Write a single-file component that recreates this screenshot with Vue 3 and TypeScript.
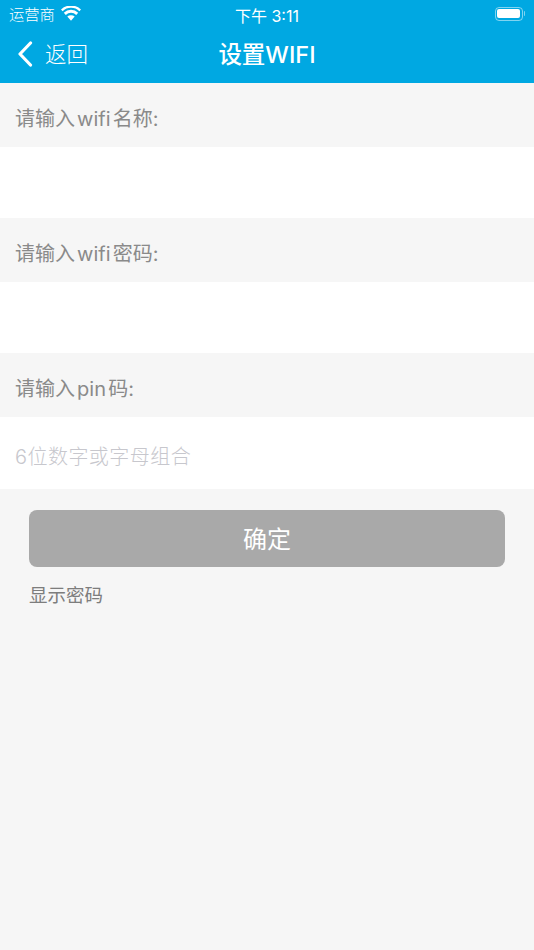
<script setup lang="ts">
const sections = [
  { label: '请输入 wifi 名称:', placeholder: '' },
  { label: '请输入 wifi 密码:', placeholder: '' },
  { label: '请输入 pin 码:', placeholder: '6位数字或字母组合' },
]
</script>

<template>
  <div class="page">
    <header class="header">
      <div class="status">
        <div class="status-left">
          <span class="carrier">运营商</span>
          <svg class="wifi" width="20" height="15" viewBox="0 0 20 15">
            <path d="M10 14.8 L6.3 10.6 A5.4 5.4 0 0 1 13.7 10.6 Z" fill="#fff" />
            <path d="M4.8 8.9 L2.8 6.7 A10.2 10.2 0 0 1 17.2 6.7 L15.2 8.9 A7.4 7.4 0 0 0 4.8 8.9 Z" fill="#fff" />
            <path d="M1.6 5.3 L0 3.5 A14.4 14.4 0 0 1 20 3.5 L18.4 5.3 A12 12 0 0 0 1.6 5.3 Z" fill="#fff" />
          </svg>
        </div>
        <span class="time">下午 3:11</span>
        <div class="battery">
          <div class="battery-body"><div class="battery-fill"></div></div>
          <div class="battery-cap"></div>
        </div>
      </div>
      <div class="nav">
        <div class="back">
          <svg width="16" height="26" viewBox="0 0 16 26">
            <path d="M13.5 2 L3 13 L13.5 24" fill="none" stroke="#fff" stroke-width="3.2" stroke-linecap="round" stroke-linejoin="round" />
          </svg>
          <span class="back-text">返回</span>
        </div>
        <div class="title">设置WIFI</div>
      </div>
    </header>

    <section v-for="s in sections" :key="s.label">
      <div class="label">{{ s.label }}</div>
      <div class="field">{{ s.placeholder }}</div>
    </section>

    <div class="actions">
      <button class="confirm">确定</button>
      <div class="show">显示密码</div>
    </div>
  </div>
</template>

<style scoped>
.page {
  width: 534px;
  height: 950px;
  background: #f6f6f6;
  font-family: "Inter", "Noto Sans CJK SC", "Liberation Sans", sans-serif;
  overflow: hidden;
}
.header {
  height: 83px;
  background: #00a8e2;
  color: #fff;
  display: flex;
  flex-direction: column;
}
.status {
  height: 27px;
  display: flex;
  align-items: center;
  justify-content: space-between;
  padding: 0 9px 0 9px;
  position: relative;
}
.status-left {
  display: flex;
  align-items: center;
  gap: 6px;
}
.carrier {
  font-size: 15.3px;
  font-weight: 300;
  margin-top: -2px;
}
.wifi {
  margin-top: -1px;
}
.time {
  position: absolute;
  left: 0;
  right: 0;
  top: 3px;
  text-align: center;
  font-size: 16px;
  font-weight: 400;
}
.battery {
  display: flex;
  align-items: center;
  gap: 1px;
}
.battery-body {
  width: 28px;
  height: 14px;
  border: 1px solid rgba(255, 255, 255, 0.5);
  border-radius: 4px;
  padding: 1.5px;
  box-sizing: border-box;
}
.battery-fill {
  width: 100%;
  height: 100%;
  background: #fff;
  border-radius: 2px;
}
.battery-cap {
  width: 1.5px;
  height: 5px;
  background: rgba(255, 255, 255, 0.5);
  border-radius: 0 1px 1px 0;
}
.nav {
  flex: 1;
  position: relative;
  display: flex;
  align-items: center;
  justify-content: center;
  padding-bottom: 5px;
}
.back {
  position: absolute;
  left: 17px;
  top: 0;
  bottom: 3px;
  display: flex;
  align-items: center;
  gap: 12px;
}
.back-text {
  font-size: 21.5px;
  font-weight: 300;
  margin-top: -2px;
}
.title {
  font-size: 23.5px;
  font-weight: 500;
}
.label {
  height: 64px;
  box-sizing: border-box;
  padding: 5px 15px 0;
  display: flex;
  align-items: center;
  font-size: 20px;
  font-weight: 400;
  word-spacing: -3.5px;
  color: #8a8a8a;
}
.field {
  height: 71px;
  box-sizing: border-box;
  background: #fff;
  padding: 5px 15px 0;
  display: flex;
  align-items: center;
  font-size: 20px;
  font-weight: 300;
  letter-spacing: 0.45px;
  color: #c7c7cd;
}
section:nth-of-type(3) .field {
  height: 72px;
}
.actions {
  padding: 21px 29px 0;
}
.confirm {
  display: block;
  width: 100%;
  height: 57px;
  border: none;
  border-radius: 8px;
  background: #a9a9a9;
  color: #fff;
  font-family: inherit;
  font-size: 24px;
  font-weight: 400;
  padding: 0 0 3px;
}
.show {
  margin-top: 15px;
  font-size: 18.5px;
  font-weight: 400;
  line-height: 26px;
  color: #7d7d7d;
}
</style>
